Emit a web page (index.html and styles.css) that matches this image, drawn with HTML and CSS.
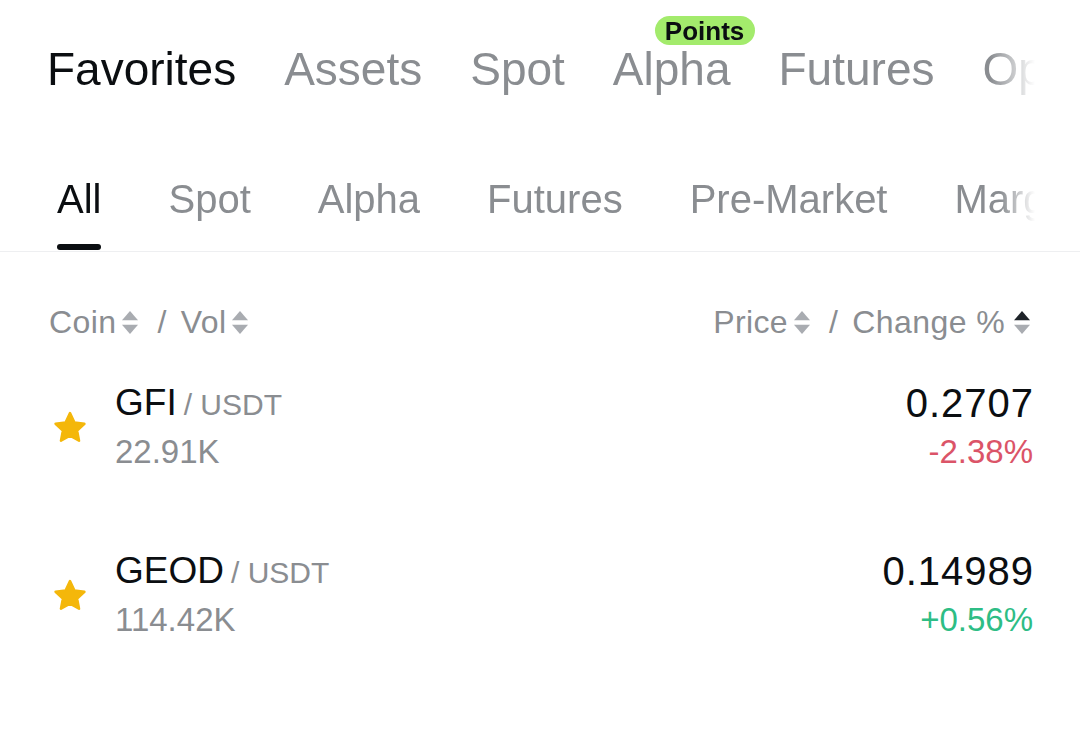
FILE: index.html
```html
<!DOCTYPE html>
<html lang="en">
<head>
  <meta charset="UTF-8" />
  <meta name="viewport" content="width=device-width, initial-scale=1.0"/>
  <title>Markets - Favorites</title>
  <link rel="stylesheet" href="styles.css">
</head>
<body>
  <nav class="main-tabs">
    <div class="tab-track">
      <span class="tab active">Favorites</span>
      <span class="tab">Assets</span>
      <span class="tab">Spot</span>
      <span class="tab has-badge">Alpha<span class="badge">Points</span></span>
      <span class="tab">Futures</span>
      <span class="tab">Options</span>
    </div>
  </nav>

  <nav class="sub-tabs">
    <div class="sub-track">
      <div class="sub-tab active"><span>All</span><i class="underline"></i></div>
      <div class="sub-tab"><span>Spot</span></div>
      <div class="sub-tab"><span>Alpha</span></div>
      <div class="sub-tab"><span>Futures</span></div>
      <div class="sub-tab"><span>Pre-Market</span></div>
      <div class="sub-tab"><span>Margin</span></div>
    </div>
  </nav>

  <div class="list-head">
    <div class="head-group">
      <span>Coin</span>
      <svg class="sort" viewBox="0 0 14 20"><polygon class="up" points="7,0 14,8 0,8"/><polygon class="down" points="0,12 14,12 7,20"/></svg>
      <span class="slash">/</span>
      <span>Vol</span>
      <svg class="sort" viewBox="0 0 14 20"><polygon class="up" points="7,0 14,8 0,8"/><polygon class="down" points="0,12 14,12 7,20"/></svg>
    </div>
    <div class="head-group">
      <span>Price</span>
      <svg class="sort" viewBox="0 0 14 20"><polygon class="up" points="7,0 14,8 0,8"/><polygon class="down" points="0,12 14,12 7,20"/></svg>
      <span class="slash">/</span>
      <span>Change %</span>
      <svg class="sort last" viewBox="0 0 14 20"><polygon class="up on" points="7,0 14,8 0,8"/><polygon class="down" points="0,12 14,12 7,20"/></svg>
    </div>
  </div>

  <div class="pair-list">
    <div class="pair-row">
      <div class="fav">
        <svg viewBox="0 0 24 24"><path d="M12 2.6l2.8 5.9 6.3.8-4.6 4.4 1.2 6.3L12 16.9 6.3 20l1.2-6.3-4.6-4.4 6.3-.8z"/></svg>
      </div>
      <div class="pair-info">
        <div class="pair-name">GFI<span class="quote">/ USDT</span></div>
        <div class="pair-vol">22.91K</div>
      </div>
      <div class="pair-price">
        <div class="price">0.2707</div>
        <div class="change down">-2.38%</div>
      </div>
    </div>

    <div class="pair-row">
      <div class="fav">
        <svg viewBox="0 0 24 24"><path d="M12 2.6l2.8 5.9 6.3.8-4.6 4.4 1.2 6.3L12 16.9 6.3 20l1.2-6.3-4.6-4.4 6.3-.8z"/></svg>
      </div>
      <div class="pair-info">
        <div class="pair-name">GEOD<span class="quote">/ USDT</span></div>
        <div class="pair-vol">114.42K</div>
      </div>
      <div class="pair-price">
        <div class="price">0.14989</div>
        <div class="change up">+0.56%</div>
      </div>
    </div>
  </div>
</body>
</html>
```

FILE: styles.css
```css
* {
  margin: 0; padding: 0; box-sizing: border-box;
  font-family: "Liberation Sans", Arial, sans-serif;
}

body {
  background-color: #ffffff;
  color: #0b0e11;
  width: 1080px;
}

/* top tabs */
.main-tabs {
  padding: 13px 45px 0 47px;
}

.tab-track {
  display: flex;
  gap: 48px;
  overflow: hidden;
  padding-top: 30px;
  -webkit-mask-image: linear-gradient(to right, #000 calc(100% - 45px), transparent);
  mask-image: linear-gradient(to right, #000 calc(100% - 45px), transparent);
}

.tab {
  flex-shrink: 0;
  position: relative;
  white-space: nowrap;
  font-size: 46px;
  line-height: 52px;
  color: #8a8d91;
}

.tab.active {
  color: #0b0e11;
}

.badge {
  position: absolute;
  left: 42px;
  top: -27px;
  height: 29px;
  padding: 0 11px 0 10px;
  border-radius: 15px;
  background-color: #a3eb6c;
  color: #0b0e11;
  font-size: 26px;
  font-weight: 700;
  line-height: 30px;
}

/* sub tabs */
.sub-tabs {
  margin-top: 81px;
  padding: 0 45px 0 57px;
  border-bottom: 1px solid #eeeff1;
}

.sub-track {
  display: flex;
  gap: 67px;
  overflow: hidden;
  padding-bottom: 1px;
  -webkit-mask-image: linear-gradient(to right, #000 calc(100% - 35px), transparent);
  mask-image: linear-gradient(to right, #000 calc(100% - 35px), transparent);
}

.sub-tab {
  flex-shrink: 0;
  display: flex;
  flex-direction: column;
  white-space: nowrap;
  font-size: 40px;
  line-height: 46px;
  color: #8a8d91;
  padding-bottom: 28px;
}

.sub-tab.active {
  color: #0b0e11;
  padding-bottom: 0;
}

.underline {
  display: block;
  height: 6px;
  margin-top: 22px;
  border-radius: 3px;
  background-color: #0b0e11;
}

/* list header */
.list-head {
  margin-top: 51px;
  padding: 0 50px 0 49px;
  display: flex;
  justify-content: space-between;
  font-size: 32px;
  line-height: 38px;
  letter-spacing: 0.4px;
  color: #8a8d91;
}

.head-group {
  display: flex;
  align-items: center;
}

.sort {
  width: 16px;
  height: 23px;
  margin-left: 6px;
}

.sort.last {
  margin-left: 9px;
}

.sort polygon {
  fill: #a9acb1;
}

.sort polygon.on {
  fill: #1e2329;
}

.slash {
  margin: 0 14px 0 19px;
}

/* pairs */
.pair-list {
  margin-top: 40px;
  display: flex;
  flex-direction: column;
  gap: 77px;
}

.pair-row {
  display: flex;
  align-items: flex-start;
  padding: 0 47px 0 50px;
}

.fav {
  width: 65px;
  display: flex;
  padding-top: 28px;
}

.fav svg {
  width: 38px;
  height: 38px;
  margin-left: 1px;
}

.fav path {
  fill: #f4b70a;
  stroke: #f4b70a;
  stroke-width: 1.6;
  stroke-linejoin: round;
}

.pair-info {
  flex: 1;
}

.pair-name {
  font-size: 37px;
  line-height: 44px;
  color: #0b0e11;
}

.quote {
  margin-left: 7px;
  font-size: 30px;
  line-height: 1;
  color: #8a8d91;
}

.pair-vol {
  margin-top: 7px;
  font-size: 33px;
  line-height: 40px;
  color: #8a8d91;
}

.pair-price {
  text-align: right;
}

.price {
  font-size: 40px;
  line-height: 44px;
  letter-spacing: 1px;
  margin-right: -1px;
}

.change {
  margin-top: 7px;
  font-size: 33px;
  line-height: 40px;
}

.change.down {
  color: #db5468;
}

.change.up {
  color: #2ebd85;
}
```
